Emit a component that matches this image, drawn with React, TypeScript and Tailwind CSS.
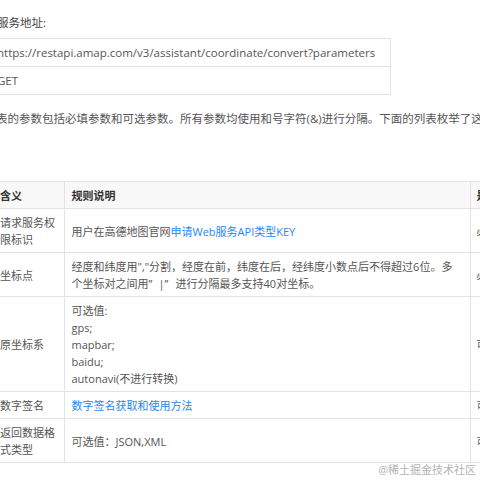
import React from "react";

const font = { fontFamily: '"Open Sans", "Noto Sans CJK SC", sans-serif' };

export default function App() {
  const td = "border-b border-[#e3e3e3] px-0 pt-[5px] pb-[4px] align-middle";
  return (
    <div className="relative w-[480px] h-[480px] overflow-hidden bg-white text-[11px] leading-[17px] text-[#555]" style={font}>
      <div className="pt-[14px] -ml-[3px] text-[#444] text-[11.5px]">服务地址:</div>

      <table className="mt-[7px] -ml-[11px] w-[402px] border-collapse table-fixed text-[11.5px]">
        <tbody>
          <tr>
            <td className="border-t border-b border-r border-[#e3e3e3] pl-[8px] py-[5px] h-[27px] whitespace-nowrap overflow-hidden">
              https://restapi.amap.com/v3/assistant/coordinate/convert?parameters
            </td>
          </tr>
          <tr>
            <td className="border-b border-r border-[#e3e3e3] pl-[8px] py-[5px] h-[28px]">GET</td>
          </tr>
        </tbody>
      </table>

      <div className="mt-[15px] -ml-[4px] whitespace-nowrap text-[#555] text-[11.5px]">
        表的参数包括必填参数和可选参数。所有参数均使用和号字符(&amp;)进行分隔。下面的列表枚举了这些参数及其使用规则。
      </div>

      <table className="mt-[54px] -ml-[8px] w-[548px] border-collapse table-fixed">
        <colgroup>
          <col className="w-[72px]" />
          <col className="w-[406px]" />
          <col className="w-[70px]" />
        </colgroup>
        <thead>
          <tr className="bg-[#f8f8f8] text-[#333] font-bold">
            <th className="border-t border-b border-r border-[#e3e3e3] pl-[8px] pt-[5px] pb-[4px] text-left font-bold">含义</th>
            <th className="border-t border-b border-r border-[#e3e3e3] pl-[7px] pt-[5px] pb-[4px] text-left font-bold">规则说明</th>
            <th className="border-t border-b border-[#e3e3e3] pl-[6px] pt-[5px] pb-[4px] text-left font-bold whitespace-nowrap">是否必须</th>
          </tr>
        </thead>
        <tbody>
          <tr>
            <td className={`${td} border-r pl-[8px] pr-[6px]`}>请求服务权限标识</td>
            <td className={`${td} border-r pl-[7px]`}>
              用户在高德地图官网<span className="text-[#1e88f5]">申请Web服务API类型KEY</span>
            </td>
            <td className={`${td} pl-[6px] whitespace-nowrap`}>必填</td>
          </tr>
          <tr>
            <td className={`${td} border-r pl-[8px]`}>坐标点</td>
            <td className={`${td} border-r pl-[7px]`}>
              经度和纬度用","分割，经度在前，纬度在后，经纬度小数点后不得超过6位。多
              <br />
              个坐标对之间用<span className="inline-block w-[10px]">”</span>|<span className="inline-block w-[11px]">”</span>进行分隔最多支持40对坐标。
            </td>
            <td className={`${td} pl-[6px] whitespace-nowrap`}>必填</td>
          </tr>
          <tr>
            <td className={`${td} border-r pl-[8px]`}>原坐标系</td>
            <td className={`${td} border-r pl-[7px]`}>
              可选值:
              <br />
              gps;
              <br />
              mapbar;
              <br />
              baidu;
              <br />
              autonavi(不进行转换)
            </td>
            <td className={`${td} pl-[6px] whitespace-nowrap`}>可选</td>
          </tr>
          <tr>
            <td className={`${td} border-r pl-[8px]`}>数字签名</td>
            <td className={`${td} border-r pl-[7px]`}>
              <span className="text-[#1e88f5]">数字签名获取和使用方法</span>
            </td>
            <td className={`${td} pl-[6px] whitespace-nowrap`}>可选</td>
          </tr>
          <tr>
            <td className={`${td} border-r pl-[8px] pr-[6px]`}>返回数据格式类型</td>
            <td className={`${td} border-r pl-[7px]`}>可选值：JSON,XML</td>
            <td className={`${td} pl-[6px] whitespace-nowrap`}>可选</td>
          </tr>
        </tbody>
      </table>

      <div className="absolute right-[4px] top-[462px] text-[11px] leading-[16px] text-[#b3b3b3]">@稀土掘金技术社区</div>
    </div>
  );
}
